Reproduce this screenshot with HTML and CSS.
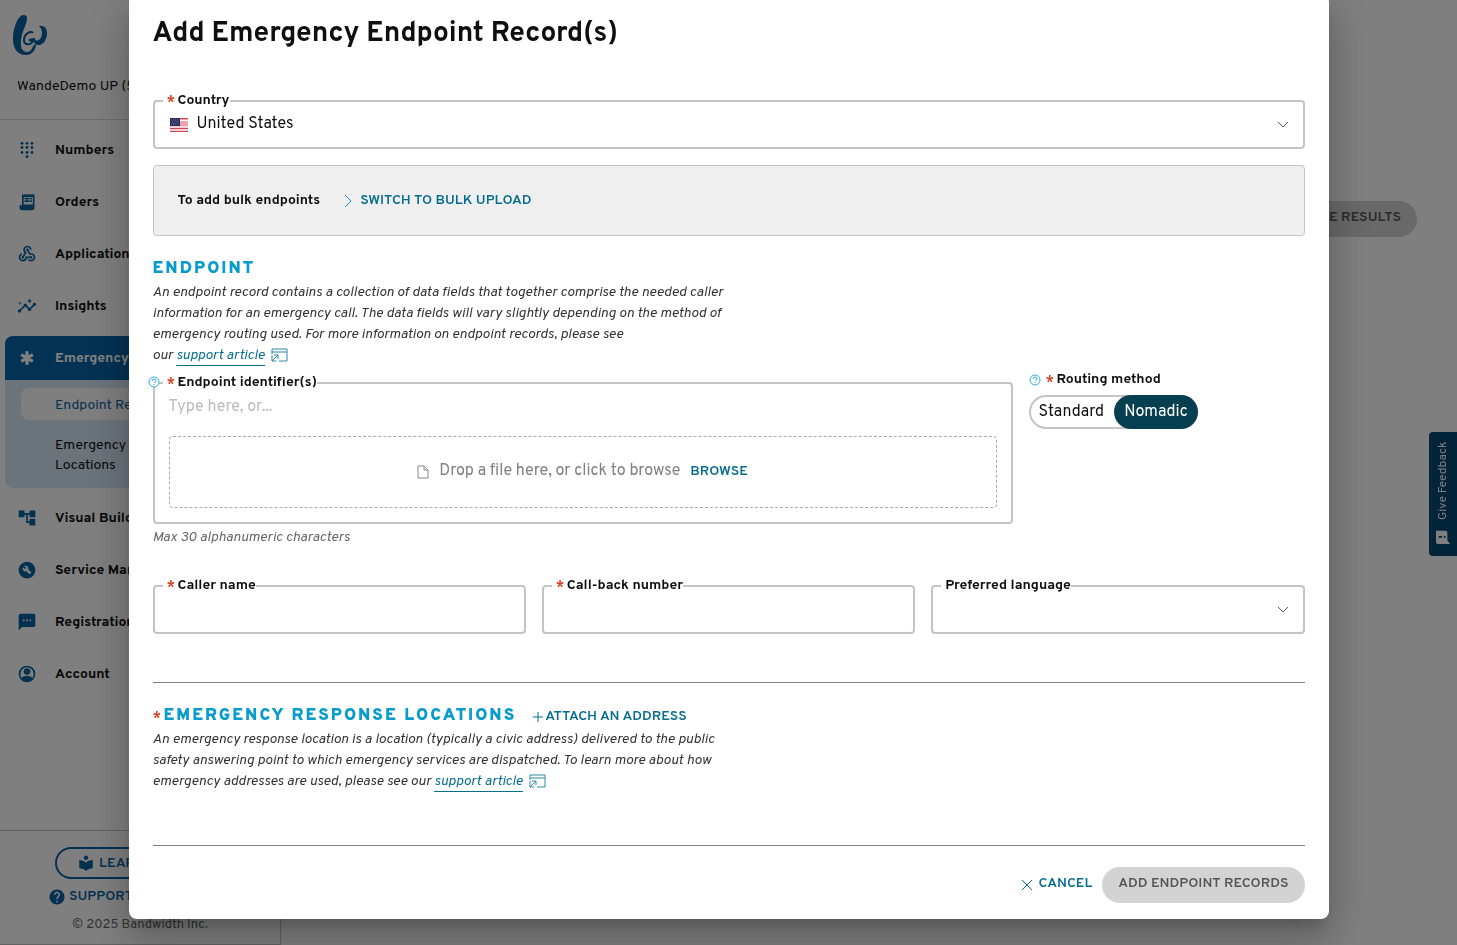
FILE: index.html
```html
<!DOCTYPE html>
<html lang="en">
<head>
    <meta charset="UTF-8">
    <meta name="viewport" content="width=device-width, initial-scale=1.0">
    <title>Add Emergency Endpoint Record(s)</title>
    <link rel="stylesheet" href="styles.css">
</head>
<body>
    <div class="app">
        <aside class="sidebar">
            <div class="brand">
                <svg class="logo" viewBox="0 0 34 40">
                    <path d="M10 0C5 1 0 12 0 24c0 9 4 16 13 16 6 0 10-5 10-11l-3 2c-1 4-4 6-6 6-5 0-7-5-6-12C9 16 14 9 14 3c0-2-1-3-4-3z"/>
                    <path d="M20 18c-2-3-9 1-9 7 0 5 6 6 9 1l-4-1 5-1c1 6 6 6 8 2" fill="none" stroke="#0a62a0" stroke-width="2"/>
                    <path d="M26 11c5-1 8 2 8 7 0 7-4 12-8 12-3 0-5-2-5-5 4 2 8-1 8-7 0-3-1-5-3-7z"/>
                </svg>
            </div>
            <div class="account-name">WandeDemo UP (5009210)</div>
            <nav class="nav">
                <a class="nav-item" href="#">
                    <svg class="icon" viewBox="0 0 24 24"><circle cx="6" cy="4" r="1.700"/><circle cx="12" cy="4" r="1.700"/><circle cx="18" cy="4" r="1.700"/><circle cx="6" cy="9" r="1.700"/><circle cx="12" cy="9" r="1.700"/><circle cx="18" cy="9" r="1.700"/><circle cx="6" cy="15" r="1.700"/><circle cx="12" cy="15" r="1.700"/><circle cx="18" cy="15" r="1.700"/><circle cx="12" cy="20" r="1.700"/></svg>
                    Numbers
                </a>
                <a class="nav-item" href="#">
                    <svg class="icon" viewBox="0 0 24 24"><path fill-rule="evenodd" d="M19.500 3.500L18 2l-1.500 1.500L15 2l-1.500 1.500L12 2l-1.500 1.500L9 2 7.500 3.500 6 2v14H3v3c0 1.700 1.300 3 3 3h12c1.700 0 3-1.300 3-3V2zM8 6v9h11V6zM9 7h6v2H9zm7 0h2v2h-2zm-7 3h6v2H9zm7 0h2v2h-2z"/></svg>
                    Orders
                </a>
                <a class="nav-item" href="#">
                    <svg class="icon" viewBox="0 0 24 24"><path d="M10 15h5.880c.27-.31.67-.5 1.120-.5.83 0 1.500.67 1.500 1.500s-.67 1.500-1.500 1.500c-.44 0-.84-.19-1.120-.5H11.900c-.46 2.280-2.480 4-4.900 4-2.760 0-5-2.240-5-5 0-2.420 1.720-4.440 4-4.900v2.070C4.840 13.580 4 14.700 4 16c0 1.650 1.350 3 3 3s3-1.350 3-3v-1zm2.500-11c1.650 0 3 1.350 3 3h2c0-2.760-2.240-5-5-5s-5 2.240-5 5c0 1.430.6 2.710 1.550 3.620l-2.350 3.900C6.020 14.660 5.500 15.270 5.500 16c0 .83.67 1.500 1.500 1.500s1.500-.67 1.500-1.500c0-.16-.02-.31-.07-.45l3.380-5.630C10.490 9.610 9.500 8.420 9.500 7c0-1.650 1.350-3 3-3zm4.500 9c-.64 0-1.230.2-1.720.54l-3.050-5.070C11.530 8.350 11 7.740 11 7c0-.83.67-1.500 1.500-1.500S14 6.170 14 7c0 .15-.02.29-.06.43l2.190 3.650c.28-.05.57-.08.87-.08 2.760 0 5 2.240 5 5s-2.240 5-5 5c-1.850 0-3.470-1.010-4.330-2.500h2.670c.48.32 1.050.5 1.660.5 1.650 0 3-1.350 3-3s-1.350-3-3-3z"/></svg>
                    Applications
                </a>
                <a class="nav-item" href="#">
                    <svg class="icon" viewBox="0 0 24 24"><path d="M21 8c-1.450 0-2.260 1.440-1.930 2.510l-3.550 3.560c-.3-.09-.74-.09-1.040 0l-2.550-2.550C12.270 10.450 11.460 9 10 9c-1.450 0-2.270 1.440-1.930 2.520l-4.560 4.550C2.440 15.740 1 16.550 1 18c0 1.100.9 2 2 2 1.450 0 2.260-1.440 1.930-2.510l4.550-4.560c.3.09.74.09 1.040 0l2.550 2.550C12.730 16.550 13.540 18 15 18c1.450 0 2.270-1.440 1.930-2.520l3.560-3.550c1.070.33 2.510-.48 2.510-1.930 0-1.100-.9-2-2-2zM15 9l.94-2.070L18 6l-2.060-.93L15 3l-.92 2.070L12 6l2.080.93zM3.500 11L4 9l2-.5L4 8l-.5-2L3 8l-2 .5L3 9z"/></svg>
                    Insights
                </a>
                <div class="nav-group">
                    <a class="nav-item active" href="#">
                        <svg class="icon" viewBox="0 0 24 24"><path d="M12 4v16M5 8l14 8M19 8L5 16" fill="none" stroke="#fff" stroke-width="4"/></svg>
                        Emergency
                    </a>
                    <a class="sub-item current" href="#">Endpoint Records</a>
                    <a class="sub-item" href="#">Emergency<br>Locations</a>
                </div>
                <a class="nav-item" href="#">
                    <svg class="icon" viewBox="0 0 24 24"><path d="M22 11V3h-7v3H9V3H2v8h7V8h2v10h4v3h7v-8h-7v3h-2V8h2v3z"/></svg>
                    Visual Builder
                </a>
                <a class="nav-item" href="#">
                    <svg class="icon" viewBox="0 0 24 24"><path d="M12 2C6.480 2 2 6.480 2 12s4.480 10 10 10 10-4.480 10-10S17.520 2 12 2zm4.900 13.490l-1.400 1.400c-.2.2-.51.2-.71 0l-3.410-3.410c-1.220.43-2.640.17-3.620-.81-1.110-1.110-1.300-2.790-.59-4.100l2.350 2.350 1.410-1.410-2.350-2.340c1.320-.71 2.990-.52 4.100.59.98.98 1.240 2.400.81 3.620l3.410 3.410c.19.19.19.51 0 .7z"/></svg>
                    Service Management
                </a>
                <a class="nav-item" href="#">
                    <svg class="icon" viewBox="0 0 24 24"><path d="M20 2H4c-1.100 0-2 .9-2 2v18l4-4h14c1.100 0 2-.9 2-2V4c0-1.100-.9-2-2-2zM9 11H7V9h2v2zm4 0h-2V9h2v2zm4 0h-2V9h2v2z"/></svg>
                    Registration
                </a>
                <a class="nav-item" href="#">
                    <svg class="icon" viewBox="0 0 24 24"><circle cx="12" cy="12" r="9" fill="none" stroke="#0a62a0" stroke-width="2"/><circle cx="12" cy="9" r="4"/><path d="M5 17c3-4 11-4 14 0-3 5-11 5-14 0z"/></svg>
                    Account
                </a>
            </nav>
            <div class="sidebar-footer">
                <button class="learn" type="button">
                    <svg class="icon" viewBox="0 0 24 24"><path d="M12 11.550C9.640 9.350 6.480 8 3 8v11c3.480 0 6.640 1.350 9 3.550 2.360-2.190 5.520-3.550 9-3.550V8c-3.480 0-6.640 1.350-9 3.550zM12 8c1.660 0 3-1.340 3-3s-1.340-3-3-3-3 1.340-3 3 1.340 3 3 3z"/></svg>
                    LEARN MORE
                </button>
                <a class="support" href="#">
                    <svg class="icon" viewBox="0 0 24 24"><path d="M12 2C6.480 2 2 6.480 2 12s4.480 10 10 10 10-4.480 10-10S17.520 2 12 2zm1 17h-2v-2h2v2zm2.070-7.750l-.9.92C13.450 12.900 13 13.500 13 15h-2v-.5c0-1.100.45-2.100 1.170-2.830l1.240-1.260c.37-.36.59-.86.59-1.410 0-1.100-.9-2-2-2s-2 .9-2 2H8c0-2.210 1.790-4 4-4s4 1.790 4 4c0 .88-.36 1.680-.93 2.250z"/></svg>
                    SUPPORT CENTER
                </a>
                <div class="copyright">© 2025 Bandwidth Inc.</div>
            </div>
        </aside>
        <main class="page">
            <button class="pill" type="button" disabled>SAVE RESULTS</button>
        </main>
        <button class="feedback" type="button">
            <svg class="feedback-icon" viewBox="0 0 16 16"><path fill-rule="evenodd" d="M2 0h13v11q0 2-2 2h-9L0 16V2q0-2 2-2zM7 3h2v4H7zM7 9h2v2H7z" transform="rotate(90 8 8)"/></svg>
            Give Feedback
        </button>
    </div>

    <div class="overlay">
        <form class="modal" role="dialog" aria-labelledby="modal-title">
            <h1 id="modal-title">Add Emergency Endpoint Record(s)</h1>

            <div class="field">
                <label for="country"><span class="req">*</span>Country</label>
                <svg class="flag" viewBox="0 0 18 14">
                    <rect width="18" height="14" fill="#eda3ab"/>
                    <path d="M0 .500h18M0 10.500h18M0 13.500h18" stroke="#cf4456"/>
                    <path d="M10 2.500h8M0 9h18M0 12h18" stroke="#fff"/>
                    <rect width="10" height="8" fill="#25305f"/>
                    <path d="M1 2h8M2 4h8M1 6h8" stroke="#6d78a0" stroke-dasharray="1 1"/>
                </svg>
                <select id="country" name="country">
                    <option>United States</option>
                    <option>Canada</option>
                </select>
                <svg class="chevron" viewBox="0 0 12 8"><path d="M1 1l5 5 5-5"/></svg>
            </div>

            <div class="bulk">
                <strong>To add bulk endpoints</strong>
                <button class="link-btn" type="button">
                    <svg class="arrow" viewBox="0 0 8 14"><path d="M1 1l6 6-6 6"/></svg>
                    SWITCH TO BULK UPLOAD
                </button>
            </div>

            <h2>ENDPOINT</h2>
            <p class="desc">
                An endpoint record contains a collection of data fields that together comprise the needed caller<br>
                information for an emergency call. The data fields will vary slightly depending on the method of<br>
                emergency routing used. For more information on endpoint records, please see<br>
                our <a href="#">support article</a>
                <svg class="window" viewBox="0 0 17 14"><path d="M1 6V1h15v12H8M1 4h15M1 13l6-6M3 7h4v4M1 7v6h4"/></svg>
            </p>

            <div class="endpoint-row">
                <div class="identifiers">
                    <div class="field tall">
                        <label for="identifiers"><span class="req">*</span>Endpoint identifier(s)</label>
                        <svg class="help over" viewBox="0 0 12 12"><circle cx="6" cy="6" r="5"/><path d="M4 5q0-2 2-2t2 2q0 1-2 2M6 8v1"/></svg>
                        <input id="identifiers" type="text" placeholder="Type here, or...">
                        <div class="dropzone">
                            <svg class="file" viewBox="0 0 12 14"><path d="M1 1h6l4 4v8H1zM7 1v4h4"/></svg>
                            <span>Drop a file here, or click to browse</span>
                            <button class="link-btn" type="button">BROWSE</button>
                        </div>
                    </div>
                    <div class="hint">Max 30 alphanumeric characters</div>
                </div>
                <fieldset class="routing">
                    <legend>
                        <svg class="help" viewBox="0 0 12 12"><circle cx="6" cy="6" r="5"/><path d="M4 5q0-2 2-2t2 2q0 1-2 2M6 8v1"/></svg>
                        <span class="req">*</span>Routing method
                    </legend>
                    <div class="toggle">
                        <input type="radio" id="standard" name="routing">
                        <label for="standard">Standard</label>
                        <input type="radio" id="nomadic" name="routing" checked>
                        <label for="nomadic">Nomadic</label>
                    </div>
                </fieldset>
            </div>

            <div class="caller-row">
                <div class="field">
                    <label for="caller"><span class="req">*</span>Caller name</label>
                    <input id="caller" type="text">
                </div>
                <div class="field">
                    <label for="callback"><span class="req">*</span>Call-back number</label>
                    <input id="callback" type="tel">
                </div>
                <div class="field">
                    <label for="language">Preferred language</label>
                    <select id="language" name="language">
                        <option value=""></option>
                        <option>English</option>
                    </select>
                    <svg class="chevron" viewBox="0 0 12 8"><path d="M1 1l5 5 5-5"/></svg>
                </div>
            </div>

            <section class="locations">
                <div class="locations-head">
                    <h2><span class="req">*</span>EMERGENCY RESPONSE LOCATIONS</h2>
                    <button class="link-btn attach" type="button">
                        <svg class="plus" viewBox="0 0 12 12"><path d="M6 1v10M1 6h10"/></svg>
                        ATTACH AN ADDRESS
                    </button>
                </div>
                <p class="desc">
                    An emergency response location is a location (typically a civic address) delivered to the public<br>
                    safety answering point to which emergency services are dispatched. To learn more about how<br>
                    emergency addresses are used, please see our <a href="#">support article</a>
                    <svg class="window" viewBox="0 0 17 14"><path d="M1 6V1h15v12H8M1 4h15M1 13l6-6M3 7h4v4M1 7v6h4"/></svg>
                </p>
            </section>

            <div class="actions">
                <button class="link-btn" type="button">
                    <svg class="plus" viewBox="0 0 12 12"><path d="M1 1l10 10M11 1L1 11"/></svg>
                    CANCEL
                </button>
                <button class="pill" type="submit" disabled>ADD ENDPOINT RECORDS</button>
            </div>
        </form>
    </div>
</body>
</html>
```
FILE: styles.css
```css
* {
    box-sizing: border-box;
}
body {
    margin: 0;
    font-family: Overpass, Roboto, sans-serif;
    font-size: 14px;
    color: #0f0f10;
    background: #fff;
    overflow: hidden;
}
button, input, select {
    font: inherit;
    color: inherit;
}
button {
    border: none;
    background: none;
    padding: 0;
    cursor: pointer;
}
a {
    color: inherit;
    text-decoration: none;
}

/* Page behind the dialog */
.app {
    display: flex;
    height: 100vh;
}
.sidebar {
    display: flex;
    flex-direction: column;
    width: 281px;
    border-right: 1px solid #c4c4c4;
    border-bottom: 1px solid #c4c4c4;
}
.brand {
    padding: 15px 13px 0;
    height: 75px;
}
.logo {
    width: 34px;
    height: 40px;
    fill: #0a62a0;
}
.account-name {
    padding: 2px 17px 0;
    height: 45px;
    line-height: 20px;
    border-bottom: 1px solid #d8d8d8;
}
.nav {
    display: flex;
    flex-direction: column;
    gap: 8px;
    padding: 8px 5px;
}
.nav-item {
    display: flex;
    align-items: center;
    gap: 18px;
    height: 44px;
    padding: 0 12px;
    font-weight: 700;
    white-space: nowrap;
}
.icon {
    width: 20px;
    height: 20px;
    fill: #0a62a0;
    flex: none;
}
.nav-group {
    background: #d8e8f6;
    border-radius: 8px;
    padding-bottom: 8px;
}
.nav-item.active {
    background: #0864a8;
    border-radius: 8px 8px 0 0;
    color: #fff;
}
.sub-item {
    display: block;
    margin-left: 16px;
    padding: 8px 34px 4px;
    line-height: 20px;
}
.sub-item.current {
    margin-top: 8px;
    margin-bottom: 8px;
    background: #fff;
    border-radius: 8px;
    color: #0a62a0;
}
.sidebar-footer {
    display: flex;
    flex-direction: column;
    margin-top: auto;
    height: 114px;
    padding: 16px 48px 0;
    border-top: 1px solid #c4c4c4;
    color: #0a62a0;
    font-weight: 600;
}
.learn {
    display: flex;
    align-items: center;
    gap: 4px;
    height: 32px;
    margin: 0 7px;
    padding: 0 20px;
    border: 2px solid #0a62a0;
    border-radius: 16px;
    font-weight: 600;
    white-space: nowrap;
}
.learn .icon {
    width: 18px;
    height: 18px;
}
.support {
    display: flex;
    align-items: center;
    gap: 3px;
    margin-top: 8px;
    line-height: 20px;
    white-space: nowrap;
}
.support .icon {
    width: 18px;
    height: 18px;
}
.copyright {
    margin-top: 10px;
    padding: 0 24px;
    font-size: 13px;
    font-weight: 400;
    color: #666;
    white-space: nowrap;
}
.page {
    flex: 1;
    padding: 201px 40px 0;
    text-align: right;
}
.pill {
    height: 36px;
    padding: 0 16px 3px;
    border-radius: 18px;
    background: #d3d3d3;
    color: #555;
    font-weight: 600;
}
.feedback {
    position: fixed;
    right: 0;
    top: 432px;
    display: flex;
    align-items: center;
    gap: 10px;
    width: 28px;
    height: 124px;
    padding: 12px 0 0;
    writing-mode: vertical-rl;
    transform: rotate(180deg);
    border-radius: 0 4px 4px 0;
    background: #084874;
    color: #fff;
    font-size: 12px;
    white-space: nowrap;
}
.feedback-icon {
    width: 14px;
    height: 14px;
    fill: #fff;
    flex: none;
}

/* Dialog */
.overlay {
    position: fixed;
    inset: 0;
    display: flex;
    justify-content: center;
    align-items: flex-start;
    background: rgba(0, 0, 0, 0.5);
}
.modal {
    width: 1200px;
    max-width: 100%;
    margin-top: -6px;
    padding: 24px 24px 16px;
    border-radius: 8px;
    background: #fff;
    box-shadow: 0 11px 15px -7px rgba(0, 0, 0, 0.2), 0 24px 38px 3px rgba(0, 0, 0, 0.14), 0 9px 46px 8px rgba(0, 0, 0, 0.12);
}
h1 {
    margin: 0 0 50px;
    font-size: 28px;
    line-height: 32px;
    font-weight: 700;
}
h2 {
    margin: 0;
    color: #079ccb;
    font-size: 17px;
    line-height: 24px;
    font-weight: 900;
    letter-spacing: 2px;
}
.field {
    position: relative;
    display: flex;
    align-items: center;
    height: 49px;
    padding: 0 14px;
    border: 2px solid #c4c4c4;
    border-radius: 4px;
}
.field > label {
    position: absolute;
    top: -10px;
    left: 8px;
    padding-left: 4px;
    background: #fff;
    font-weight: 700;
    line-height: 18px;
}
.req {
    display: inline-block;
    width: 11px;
    color: #d93a1a;
    font-size: 16px;
    font-weight: 500;
    line-height: 12px;
    letter-spacing: 0;
    vertical-align: -3px;
}
.field input, .field select {
    flex: 1;
    min-width: 0;
    height: 40px;
    padding: 0 0 2px;
    border: none;
    outline: none;
    background: none;
    font-size: 16px;
    appearance: none;
}
.flag {
    width: 18px;
    height: 14px;
    margin: 0 9px 0 1px;
}
.chevron {
    width: 12px;
    height: 8px;
    fill: none;
    stroke: #555;
}
.bulk {
    display: flex;
    align-items: center;
    gap: 24px;
    height: 71px;
    margin: 16px 0 21px;
    padding: 0 24px;
    border: 1px solid #c4c4c4;
    border-radius: 4px;
    background: #efefef;
}
.link-btn {
    display: inline-flex;
    align-items: center;
    gap: 8px;
    color: #076d8f;
    font-weight: 600;
}
.arrow {
    width: 8px;
    height: 14px;
    fill: none;
    stroke: #079ccb;
}
.desc {
    margin: 1px 0 0;
    font-style: italic;
    line-height: 21px;
    color: #333;
}
.desc a {
    display: inline-block;
    border-bottom: 1px solid #076d8f;
    line-height: 19px;
    color: #076d8f;
}
.window {
    width: 17px;
    height: 14px;
    margin-left: 3px;
    vertical-align: middle;
    fill: none;
    stroke: #2b8ba8;
}
.endpoint-row {
    display: grid;
    grid-template-columns: repeat(4, 1fr);
    gap: 16px;
    margin-top: 16px;
}
.identifiers {
    grid-column: span 3;
}
.field.tall {
    flex-direction: column;
    align-items: stretch;
    height: 142px;
    padding-bottom: 14px;
}
.field.tall input {
    flex: none;
    height: 48px;
    margin-bottom: 4px;
}
.field input::placeholder {
    color: #bbb;
}
.help {
    width: 12px;
    height: 12px;
    fill: #fff;
    stroke: #35addb;
}
.help.over {
    position: absolute;
    top: -8px;
    left: -7px;
}
.dropzone {
    flex: 1;
    display: flex;
    align-items: center;
    justify-content: center;
    gap: 10px;
    padding-bottom: 2px;
    border: 1px dashed #aaa;
    border-radius: 4px;
    font-size: 16px;
    color: #808080;
}
.dropzone .link-btn {
    font-size: 14px;
}
.file {
    width: 12px;
    height: 14px;
    margin-top: 2px;
    fill: none;
    stroke: #888;
}
.hint {
    margin-top: 4px;
    line-height: 20px;
    font-style: italic;
    color: #666;
}
.routing {
    min-width: 0;
    margin: -11px 0 0;
    padding: 0;
    border: none;
}
.routing legend {
    display: flex;
    align-items: center;
    padding: 0;
    font-weight: 700;
    line-height: 18px;
}
.routing .help {
    margin-right: 5px;
}
.routing .req {
    margin-top: 5px;
}
.toggle {
    display: inline-flex;
    margin-top: 6px;
    border-radius: 17px;
    box-shadow: inset 0 0 0 2px #c4c4c4;
    font-size: 16px;
    line-height: 34px;
}
.toggle input {
    position: absolute;
    opacity: 0;
}
.toggle label {
    padding: 0 10px;
    border-radius: 17px;
    cursor: pointer;
}
.toggle input:checked + label {
    background: #063f4f;
    color: #fff;
}
.caller-row {
    display: grid;
    grid-template-columns: repeat(3, 1fr);
    gap: 16px;
    margin: 37px 0 48px;
}
.locations {
    padding: 21px 0 53px;
    border-top: 1px solid #808080;
    border-bottom: 1px solid #808080;
}
.locations-head {
    display: flex;
    align-items: center;
    gap: 16px;
}
.link-btn.attach {
    gap: 1px;
}
.plus {
    width: 12px;
    height: 12px;
    margin-top: 2px;
    fill: none;
    stroke: #076d8f;
}
.actions {
    display: flex;
    justify-content: flex-end;
    gap: 10px;
    padding-top: 21px;
}
.actions .link-btn {
    gap: 6px;
    padding-bottom: 3px;
}
```
